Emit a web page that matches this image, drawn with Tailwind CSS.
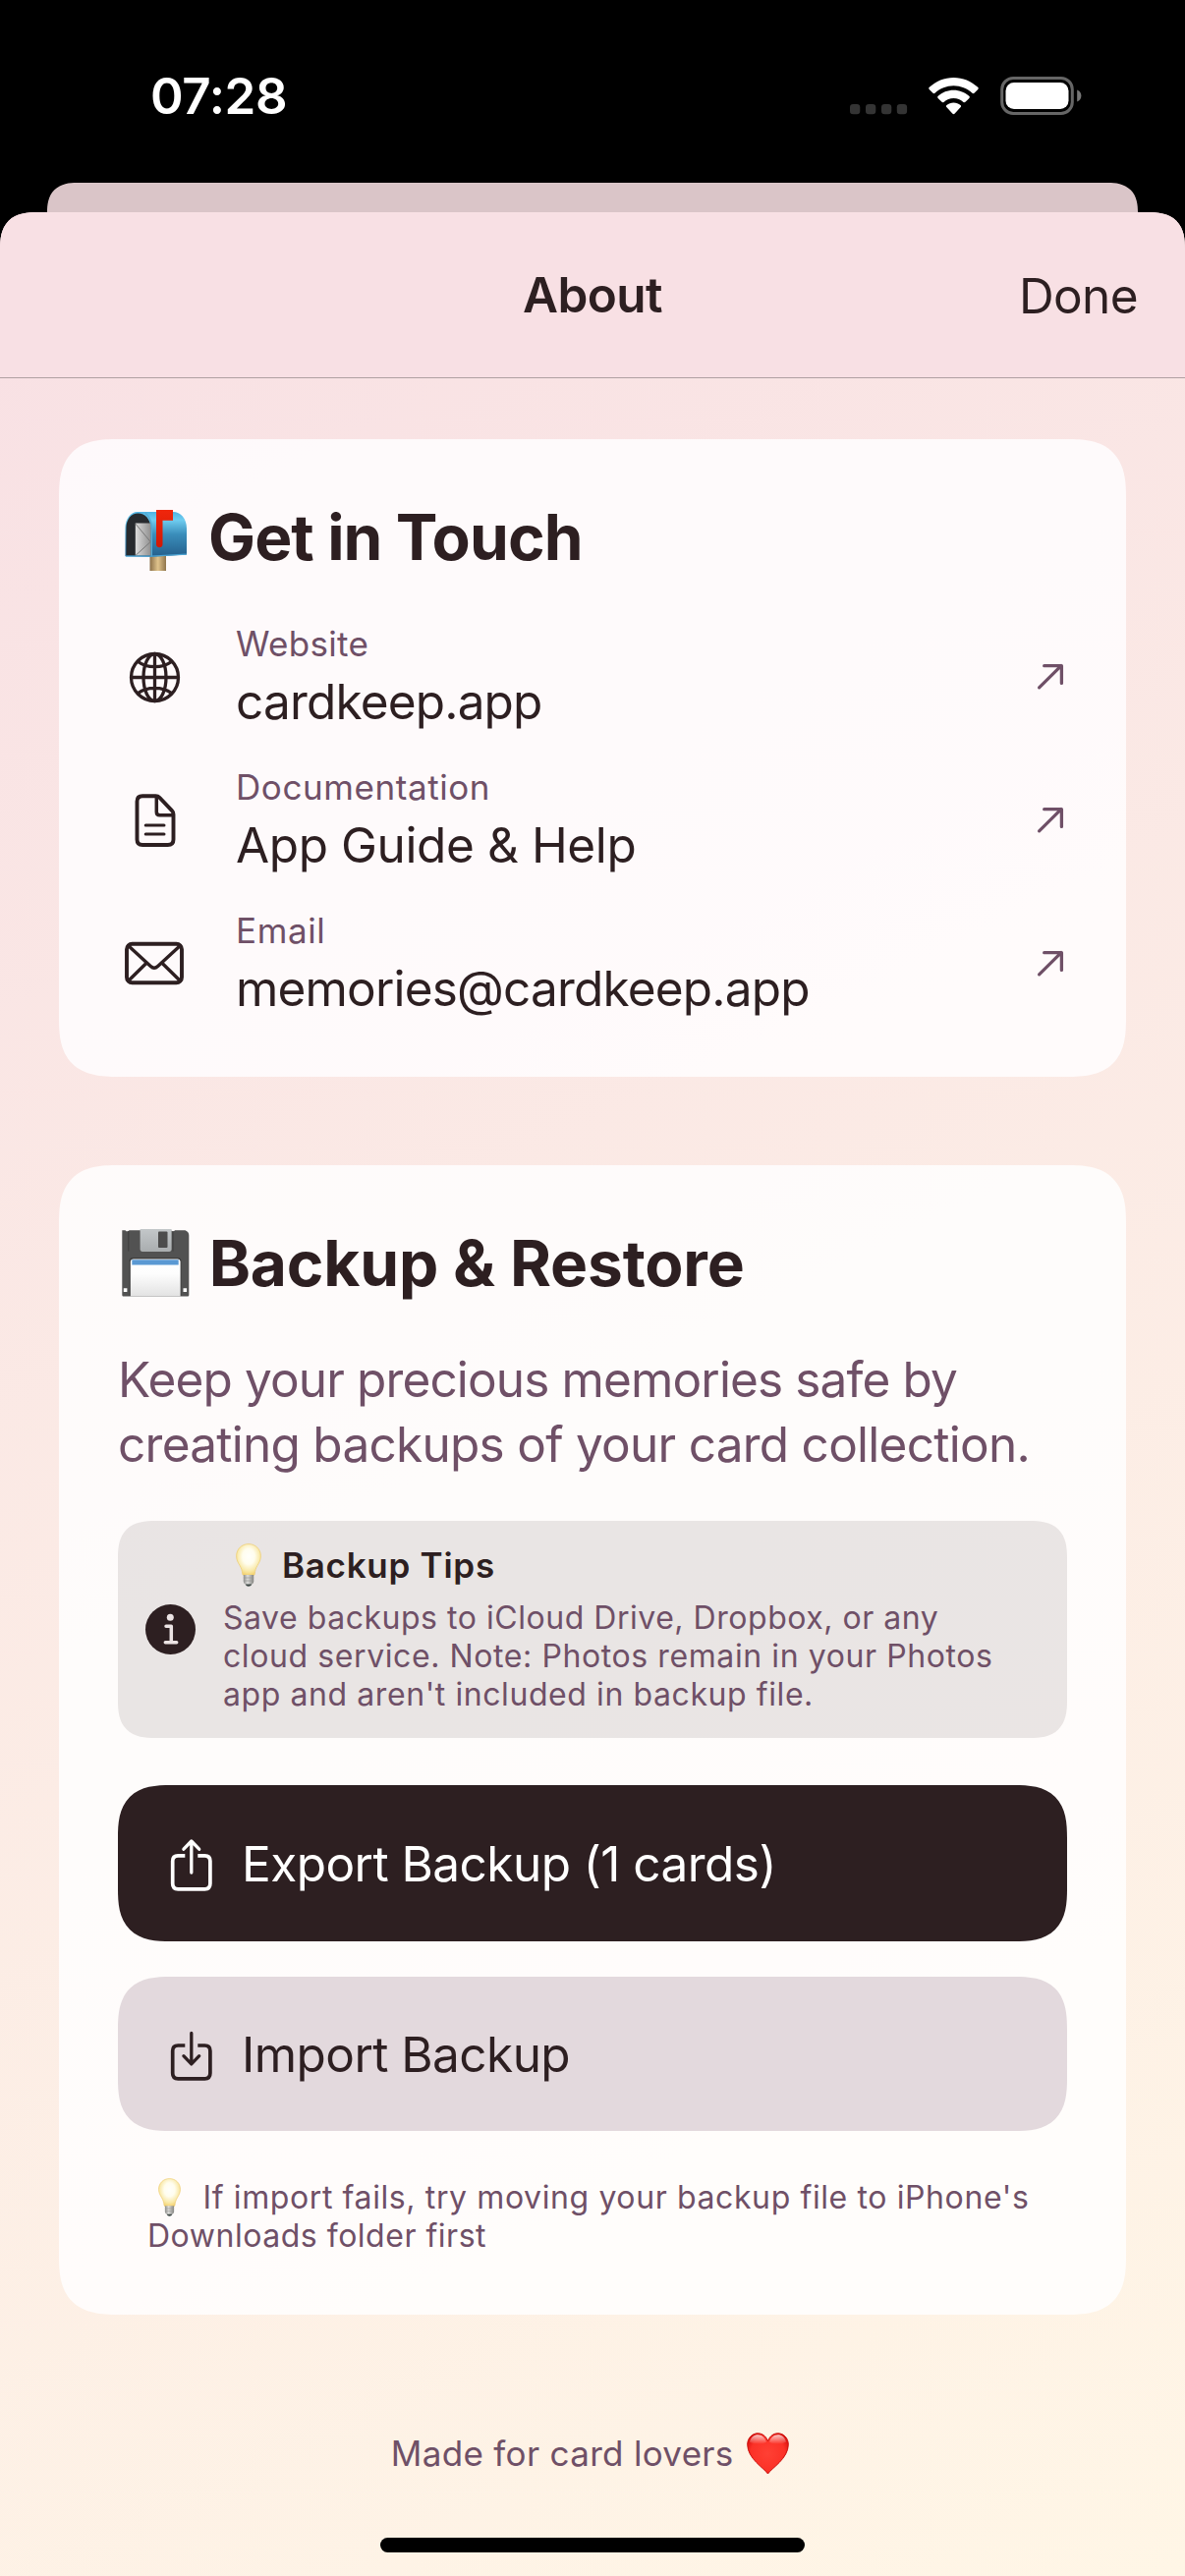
<!DOCTYPE html>
<html lang="en">
<head>
<meta charset="utf-8">
<title>About</title>
<script src="https://cdn.jsdelivr.net/npm/@tailwindcss/browser@4"></script>
</head>
<body class="w-[1206px] h-[2622px] overflow-hidden bg-black flex flex-col font-['Inter',sans-serif] text-[#2d1f21] whitespace-nowrap">

<!-- shared gradients and symbols -->
<svg class="absolute" width="0" height="0" aria-hidden="true">
  <defs>
    <radialGradient id="bulbGlass" cx=".5" cy=".4" r=".62">
      <stop offset="0" stop-color="#fffffb"/><stop offset=".4" stop-color="#fffdee"/><stop offset=".75" stop-color="#f9e9a8"/><stop offset="1" stop-color="#f3cf6a"/>
    </radialGradient>
    <linearGradient id="bulbBase" x1="0" x2="1" y1="0" y2="0">
      <stop offset="0" stop-color="#8d8d8b"/><stop offset=".4" stop-color="#dededc"/><stop offset="1" stop-color="#83837f"/>
    </linearGradient>
    <linearGradient id="boxBlue" x1="0" x2="0" y1="0" y2="1">
      <stop offset="0" stop-color="#4fb3e2"/><stop offset=".18" stop-color="#6fcdf0"/><stop offset=".5" stop-color="#3a8dba"/><stop offset="1" stop-color="#245f8c"/>
    </linearGradient>
    <linearGradient id="post" x1="0" x2="1" y1="0" y2="0">
      <stop offset="0" stop-color="#8a6f48"/><stop offset=".5" stop-color="#e0c38c"/><stop offset="1" stop-color="#8f744b"/>
    </linearGradient>
    <linearGradient id="letter" x1="0" x2="1" y1="0" y2="0">
      <stop offset="0" stop-color="#dcdcdc"/><stop offset="1" stop-color="#8f8f8f"/>
    </linearGradient>
    <linearGradient id="flag" x1="0" x2="0" y1="0" y2="1">
      <stop offset="0" stop-color="#f0260c"/><stop offset="1" stop-color="#d01804"/>
    </linearGradient>
    <linearGradient id="label" x1="0" x2="0" y1="0" y2="1">
      <stop offset="0" stop-color="#ffffff"/><stop offset=".4" stop-color="#fdfdfd"/><stop offset="1" stop-color="#e2e2e2"/>
    </linearGradient>
    <linearGradient id="shutter" x1="0" x2="0" y1="0" y2="1">
      <stop offset="0" stop-color="#c3c7c9"/><stop offset="1" stop-color="#a9adaf"/>
    </linearGradient>
    <radialGradient id="heart" cx=".5" cy=".5" r=".6">
      <stop offset="0" stop-color="#ff4034"/><stop offset=".7" stop-color="#fb3127"/><stop offset="1" stop-color="#d80f0c"/>
    </radialGradient>
    <linearGradient id="heartShine" x1="0" x2="0" y1="0" y2="1">
      <stop offset="0" stop-color="#ffffff" stop-opacity=".75"/><stop offset="1" stop-color="#ffffff" stop-opacity="0"/>
    </linearGradient>
    <symbol id="bulb" viewBox="0 0 26 44">
      <path d="M13 .6C5.900.6.6 6 .6 12.800c0 4 1.600 6.600 3.500 9.800 1.500 2.500 2.300 5 2.700 8.400.1 1 .6 1.400 1.500 1.400h9.400c.9 0 1.400-.4 1.500-1.400.4-3.400 1.200-5.900 2.700-8.400 1.900-3.200 3.500-5.800 3.500-9.800C25.400 6 20.100.6 13 .6z" fill="url(#bulbGlass)" stroke="#efcf78" stroke-width=".8"/>
      <path d="M7.800 32h10.400v6.800c0 1.700-1.700 3-3.200 3.300h-4c-1.500-.3-3.200-1.600-3.200-3.300z" fill="url(#bulbBase)"/>
      <path d="M7.800 35h10.400M7.800 38h10.400" stroke="#9a9a96" stroke-width=".7"/>
      <path d="M9.800 41.500h6.400c-.5 1.500-1.700 2.200-3.200 2.200s-2.700-.7-3.200-2.200z" fill="#3d4744"/>
    </symbol>
    <symbol id="arrow" viewBox="0 0 34 34">
      <path d="M5.600 27.800 28 5.600M10.700 5.700h17.700v17.700" fill="none" stroke="#6f5067" stroke-width="3.300" stroke-linecap="round" stroke-linejoin="round"/>
    </symbol>
  </defs>
</svg>

<!-- status bar -->
<header class="h-[186px] shrink-0 pt-[63px] pl-[153px] pr-[96px] flex items-start justify-between text-white">
  <div class="h-[69px] leading-[69px] text-[51px] font-semibold tracking-[-0.34px]">07:28</div>
  <svg width="250" height="69" viewBox="860 63 250 69">
    <g fill="#343434">
      <rect x="865" y="106" width="10.300" height="10.300" rx="3.300"/><rect x="881" y="106" width="10.300" height="10.300" rx="3.300"/><rect x="897" y="106" width="10.300" height="10.300" rx="3.300"/><rect x="912.800" y="106" width="10.300" height="10.300" rx="3.300"/>
    </g>
    <g fill="#fff">
      <path d="M970.500 79c9.400 0 18 3.700 24.700 9.800.7.600.7 1.500.1 2.100l-3.800 3.800c-.6.600-1.400.6-2 0-5.200-4.700-11.900-7.500-19-7.500s-13.800 2.800-19 7.500c-.6.600-1.400.6-2 0l-3.800-3.800c-.6-.6-.6-1.500.1-2.100C952.500 82.700 961.100 79 970.500 79z"/>
      <path d="M970.500 91.700c6 0 11.600 2.300 15.800 6.100.7.600.7 1.500.1 2.100l-3.900 3.900c-.6.600-1.400.6-2 .1-2.800-2.300-6.200-3.800-10-3.800s-7.200 1.500-10 3.800c-.6.500-1.400.5-2-.1l-3.900-3.900c-.6-.6-.6-1.500.1-2.100 4.200-3.800 9.800-6.100 15.800-6.100z"/>
      <path d="M970.500 104.600c2.700 0 5.100.9 7 2.400.8.600.8 1.500.2 2.100l-6.200 6.600c-.6.600-1.400.6-2 0l-6.200-6.600c-.6-.6-.6-1.500.2-2.100 1.900-1.500 4.300-2.400 7-2.400z"/>
      <rect x="1023.500" y="84" width="64" height="27" rx="8.500"/>
    </g>
    <rect x="1019.700" y="79.500" width="71.600" height="36" rx="11.500" fill="none" stroke="#666" stroke-width="3"/>
    <path d="M1096.200 91.500c2.600 1 4.200 3.300 4.200 6s-1.600 5-4.200 6z" fill="#777"/>
  </svg>
</header>

<!-- sheet peeking out from behind -->
<div class="h-[30px] mx-12 shrink-0 bg-[#dac5c8] rounded-t-[36px] [corner-shape:superellipse(1.3)]"></div>

<!-- front sheet -->
<main class="h-[2406px] shrink-0 flex flex-col overflow-hidden rounded-t-[38px] [corner-shape:superellipse(1.4)] bg-[linear-gradient(153.4deg,#f8e0e4,#fff6e6)]">

  <nav class="h-[169px] shrink-0 bg-[#f8e0e4] border-b border-[#b0a0a2] grid grid-cols-[1fr_auto_1fr] items-center text-[49.5px] leading-[66px]">
    <span></span>
    <h1 class="font-semibold tracking-[-0.59px]">About</h1>
    <a class="justify-self-end pr-[48px] pt-[2px] tracking-[-0.6px]">Done</a>
  </nav>

  <section class="mt-[62px] mx-[60px] h-[649px] shrink-0 px-[60px] pt-[60px] bg-[#fffeff]/83 rounded-[60px] [corner-shape:superellipse(1.45)]">
    <h2 class="h-20 flex items-center gap-[16px] text-[64px] leading-[80px] font-bold tracking-[-0.9px]">
      <svg width="76" height="80" viewBox="120 507 76 80">
        <rect x="152.500" y="566" width="16.500" height="15" fill="url(#post)"/>
        <path d="M140 521h36c8 0 14 7 14 17v26.500l-36 2.300-26.500-.8V537c0-9 5.500-16 12.500-16z" fill="url(#boxBlue)"/>
        <path d="M128.500 565.500V537c0-8.500 5-14.500 12-14.500s12.800 6 12.800 14.500v28.500z" fill="#272a2e"/>
        <path d="M137.800 532.500h15.800v33h-15.800z" fill="url(#letter)"/>
        <path d="m137.800 533 15.400 18.500-15.400 14" fill="none" stroke="#777" stroke-width="1"/>
        <path d="M154.300 566.500V538c0-7-2.500-12.500-6.500-16" fill="none" stroke="#55a9d2" stroke-width="1.400"/>
        <path d="M127.800 566.200h26.500l35.500-2" fill="none" stroke="#4ba3d2" stroke-width="1.200"/>
        <path d="M159 519h17v10.800h-10.500v24.500c0 4-6.500 4-6.500 0z" fill="url(#flag)"/>
      </svg>
      <span>Get in Touch</span>
    </h2>

    <ul class="mt-[43px] flex flex-col gap-[29px]">
      <li class="h-[117px] flex items-center">
        <svg width="75" height="117" viewBox="120 630 75 117" fill="none" stroke="#2d1f21" stroke-width="3.300">
          <circle cx="157.500" cy="689.500" r="24"/>
          <ellipse cx="157.500" cy="689.500" rx="11.500" ry="24"/>
          <path d="M157.500 665v49M133 689.500h49M140.500 673.500c4.500 3.400 10.400 5.200 17 5.200s12.500-1.800 17-5.200M140.500 705.500c4.500-3.400 10.400-5.200 17-5.200s12.500 1.800 17 5.200"/>
        </svg>
        <div class="ml-[45px] flex-1">
          <div class="text-[35px] leading-[51px] tracking-[0.3px] text-[#6f5067]">Website</div>
          <div class="text-[49.5px] leading-[66px] tracking-[-0.82px]">cardkeep.app</div>
        </div>
        <svg width="34" height="34"><use href="#arrow"/></svg>
      </li>
      <li class="h-[117px] flex items-center">
        <svg width="75" height="117" viewBox="120 776 75 117" fill="none" stroke="#2d1f21" stroke-width="3.900" stroke-linejoin="round" stroke-linecap="round">
          <path d="M145 810.200h13.500c1.500 0 2.800.5 3.800 1.600l12.700 13.400c1 1 1.500 2.300 1.500 3.800v25.500c0 3.700-2 5.500-5.700 5.500H145c-3.700 0-5.500-1.800-5.500-5.500v-38.800c0-3.700 1.800-5.500 5.500-5.500z"/>
          <path d="M159.300 811v15.500c0 2 1 3.200 3.200 3.200H176" stroke-width="3.500"/>
          <path d="M148.200 840h18.800M148.200 849h18.800" stroke-width="3"/>
        </svg>
        <div class="ml-[45px] flex-1">
          <div class="text-[35px] leading-[51px] tracking-[0.58px] text-[#6f5067]">Documentation</div>
          <div class="text-[49.5px] leading-[66px] tracking-[-0.4px]">App Guide &amp; Help</div>
        </div>
        <svg width="34" height="34"><use href="#arrow"/></svg>
      </li>
      <li class="h-[117px] flex items-center">
        <svg width="75" height="117" viewBox="120 922 75 117" fill="none" stroke="#2d1f21" stroke-width="3.900" stroke-linejoin="round" stroke-linecap="round">
          <rect x="129" y="960.800" width="56" height="39.500" rx="5.500"/>
          <path d="m130.500 962.500 22.800 21c2.400 2.200 4.900 2.200 7.300 0l22.800-21M130.500 998.500l18.300-18M183.500 998.500l-18.300-18" stroke-width="3.400"/>
        </svg>
        <div class="ml-[45px] flex-1">
          <div class="text-[35px] leading-[51px] tracking-[0.6px] text-[#6f5067]">Email</div>
          <div class="text-[49.5px] leading-[66px] tracking-[-0.82px]">memories@cardkeep.app</div>
        </div>
        <svg width="34" height="34"><use href="#arrow"/></svg>
      </li>
    </ul>
  </section>

  <section class="mt-[90px] mx-[60px] h-[1170px] shrink-0 px-[60px] pt-[60px] bg-white/83 rounded-[60px] [corner-shape:superellipse(1.45)]">
    <h2 class="h-20 flex items-center gap-[16.700px] text-[64px] leading-[80px] font-bold tracking-[-0.17px]">
      <svg width="76" height="80" viewBox="120 1246 76 80">
        <path d="M124.300 1252.300h3.200l1 1h2l1-1h42.500l1 1h2l1-1h10.500c2.500 1.200 3.800 2.600 3.800 5V1318c0 1-.6 1.600-1.600 1.600h-64.800c-1 0-1.600-.6-1.600-1.600z" fill="#525252"/>
        <path d="M130.800 1253v20.500M176 1253v20.500" stroke="#3c3c3c" stroke-width="1"/>
        <path d="M131.500 1319v-35.500c0-2 1.400-3.500 3.500-3.500h46c2.100 0 3.500 1.500 3.500 3.500v35.500" fill="#3e3e3e"/>
        <path d="M142.600 1251h32v20.600c0 1.600-.9 2.400-2.400 2.400h-27.200c-1.500 0-2.400-.8-2.400-2.400z" fill="url(#shutter)"/>
        <rect x="161" y="1253.500" width="9.500" height="16.500" rx="1" fill="#4c4c4c"/>
        <path d="M132.800 1319.600v-35.100c0-2 1.200-3 3-3h44.800c1.800 0 3 1 3 3v35.100z" fill="url(#label)"/>
        <path d="M134.300 1282.300h47.400v5.200h-47.400z" fill="#5a99d3"/>
        <path d="M125.800 1311.300h3.600v3.600h-3.600zM186.500 1311.300h3.600v3.600h-3.600z" fill="#fff"/>
      </svg>
      <span>Backup &amp; Restore</span>
    </h2>

    <p class="mt-[45px] text-[49.5px] leading-[66px] text-[#6f5067]"><span class="tracking-[-0.86px]">Keep your precious memories safe by</span><br><span class="tracking-[-0.73px]">creating backups of your card collection.</span></p>

    <div class="mt-[45px] h-[221px] pl-[27px] flex items-center gap-[27px] rounded-[38px] [corner-shape:superellipse(1.4)] bg-[#2d1f21]/10">
      <svg width="53" height="53" viewBox="0 0 53 53">
        <circle cx="26.500" cy="26.500" r="25.500" fill="#2d1f21"/>
        <circle cx="26.300" cy="14.300" r="3.500" fill="#ece4e4"/>
        <path d="M22 23.300h5.300v16.300M21.300 39.700h11.400" fill="none" stroke="#ece4e4" stroke-width="3.500" stroke-linecap="round" stroke-linejoin="round"/>
      </svg>
      <div class="h-[221px] pt-[21px]">
        <h3 class="h-12 pl-[13px] flex items-center gap-[21px] text-[35px] leading-[48px] font-semibold tracking-[0.72px]">
          <svg width="26" height="44"><use href="#bulb"/></svg>
          <span>Backup Tips</span>
        </h3>
        <p class="mt-[10px] text-[32px] leading-[39px] text-[#6f5067]"><span class="tracking-[0.53px]">Save backups to iCloud Drive, Dropbox, or any</span><br><span class="tracking-[0.59px]">cloud service. Note: Photos remain in your Photos</span><br><span class="tracking-[0.58px]">app and aren't included in backup file.</span></p>
      </div>
    </div>

    <button class="mt-12 w-full h-[159px] pl-[50px] flex items-center gap-[26px] rounded-[54px] [corner-shape:superellipse(1.45)] bg-[#2d1f21] text-white text-[49.5px] leading-[66px] tracking-[-0.54px]">
      <svg width="50" height="159" viewBox="170 1817 50 159" fill="none" stroke="#fff" stroke-width="3.700" stroke-linecap="round" stroke-linejoin="round">
        <path d="M188.300 1888.800H181.200c-3.600 0-5.500 1.900-5.500 5.500v23c0 3.600 1.900 5.500 5.500 5.500h27.200c3.600 0 5.500-1.900 5.500-5.500v-23c0-3.600-1.900-5.500-5.500-5.500h-7.100" stroke-linecap="butt"/>
        <path d="M194.800 1874.500v31.500M186.900 1882.200l7.900-8.200 7.900 8.200" stroke-width="3.300"/>
      </svg>
      <span>Export Backup (1 cards)</span>
    </button>

    <button class="mt-9 w-full h-[157px] pl-[50px] flex items-center gap-[26px] rounded-[54px] [corner-shape:superellipse(1.45)] bg-[#e3d9dd] text-[49.5px] leading-[66px] tracking-[-0.56px]">
      <svg width="50" height="157" viewBox="170 2012 50 157" fill="none" stroke="#2d1f21" stroke-width="3.700" stroke-linecap="round" stroke-linejoin="round">
        <path d="M188.300 2082H181.200c-3.600 0-5.500 1.900-5.500 5.500v22.800c0 3.600 1.900 5.500 5.500 5.500h27.200c3.600 0 5.500-1.900 5.500-5.500v-22.800c0-3.600-1.900-5.500-5.500-5.500h-7.100" stroke-linecap="butt"/>
        <path d="M194.800 2069.500v31M186.900 2092.700l7.900 8.200 7.900-8.200" stroke-width="3.300"/>
      </svg>
      <span>Import Backup</span>
    </button>

    <div class="mt-12 pl-[30px] text-[32px] leading-[39px] text-[#6f5067]">
      <div class="h-[39px] pl-[11px] flex items-center gap-[22.500px] tracking-[0.61px]">
        <svg width="23" height="39"><use href="#bulb"/></svg>
        <span>If import fails, try moving your backup file to iPhone's</span>
      </div>
      <div class="tracking-[0.52px]">Downloads folder first</div>
    </div>
  </section>

  <footer class="flex flex-col items-center">
    <p class="mt-[116px] h-[50px] pr-[5px] flex items-center gap-[13.500px] text-[35px] leading-[50px] tracking-[0.31px] text-[#6f5067]">
      <span>Made for card lovers</span>
      <svg width="43" height="43" viewBox="0 0 43 43">
        <path d="M21.500 42C18 36.500.7 26.500.7 12.200.7 5.500 5.500.8 11.300.8c4.500 0 8.300 3 10.200 7.700C23.400 3.800 27.200.8 31.700.8c5.800 0 10.600 4.700 10.600 11.400C42.300 26.500 25 36.500 21.500 42z" fill="url(#heart)" stroke="#c9100c" stroke-width="1"/>
        <path d="M3 9.500C4.300 4.800 7.500 2.300 11.300 2.300c4 0 7.200 2.800 8.700 7.200-4.500 3-12.500 3-17 0zM40 9.500c-1.300-4.700-4.500-7.200-8.300-7.200-4 0-7.200 2.800-8.700 7.200 4.500 3 12.500 3 17 0z" fill="url(#heartShine)"/>
      </svg>
    </p>
    <div class="mt-[61px] w-[432px] h-[15px] rounded-full bg-black"></div>
  </footer>
</main>
</body>
</html>
